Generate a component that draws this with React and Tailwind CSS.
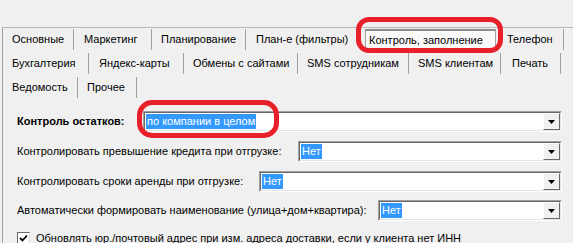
import React from "react";

const Tab = ({ w, pl, label, sep = true }) => (
	<div
		className={`h-[21px] mt-[1px] flex items-center whitespace-nowrap ${sep ? "border-r border-[#a0a0a0]" : ""}`}
		style={{ width: w, paddingLeft: pl }}
	>
		{label}
	</div>
);

const Arrow = () => (
	<div className="w-[17px] h-full flex items-center justify-center bg-[#f0f0f0] border border-t-white border-l-white border-b-[#696969] border-r-[#696969]">
		<svg width="7" height="4" viewBox="0 0 7 4">
			<polygon points="0,0 7,0 3.5,4" fill="#000" />
		</svg>
	</div>
);

const Combo = ({ value }) => (
	<div className="flex-1 h-[21px] flex border border-t-[#a0a0a0] border-l-[#a0a0a0] border-b-white border-r-white">
		<div className="flex-1 flex bg-white border border-t-[#696969] border-l-[#696969] border-b-[#e3e3e3] border-r-[#e3e3e3]">
			<div className="flex-1 flex items-center pl-[1px]">
				<span className="bg-[#3399ff] text-white h-[15px] leading-[15px] px-[1px]">{value}</span>
			</div>
			<Arrow />
		</div>
	</div>
);

export default function App() {
	return (
		<div className="w-[573px] h-[243px] bg-[#f0f0f0] relative overflow-hidden text-[11px] text-black font-['Liberation_Sans',Arial,sans-serif]">
			<div className="pt-[27px]">
				<div className="ml-[2px] border-l border-t border-l-[#a0a0a0] border-t-[#b9b9b9] h-[216px]">
					{/* row 1 */}
					<div className="flex h-[24px]">
						<Tab w={71} pl={9} label="Основные" />
						<Tab w={78} pl={10} label="Маркетинг" />
						<Tab w={94} pl={9} label="Планирование" />
						<Tab w={117} pl={10} label="План-е (фильтры)" sep={false} />
						<div className="ml-[2px] w-[131px] h-[21px] mt-[1px] flex items-center pl-[3px] whitespace-nowrap bg-[#fafafa] border border-[#a0a0a0] border-t-2 border-t-[#8c8c8c]">
							Контроль, заполнение
						</div>
						<Tab w={68} pl={11} label="Телефон" />
					</div>
					{/* row 2 */}
					<div className="flex h-[24px]">
						<Tab w={86} pl={9} label="Бухгалтерия" />
						<Tab w={95} pl={10} label="Яндекс-карты" />
						<Tab w={114} pl={9} label="Обмены с сайтами" />
						<Tab w={111} pl={9} label="SMS сотрудникам" />
						<Tab w={92} pl={9} label="SMS клиентам" />
						<Tab w={60} pl={11} label="Печать" />
					</div>
					{/* row 3 */}
					<div className="flex h-[24px]">
						<Tab w={75} pl={9} label="Ведомость" />
						<Tab w={59} pl={9} label="Прочее" />
					</div>

					<div className="pl-[14px] w-[559px] pt-[11px] flex flex-col">
						<div className="flex items-center">
							<div className="w-[126px] font-bold whitespace-nowrap">Контроль остатков:</div>
							<Combo value="по компании в целом" />
						</div>
						<div className="flex items-center mt-[9px]">
							<div className="w-[281px] whitespace-nowrap">Контролировать превышение кредита при отгрузке:</div>
							<Combo value="Нет" />
						</div>
						<div className="flex items-center mt-[9px]">
							<div className="w-[242px] whitespace-nowrap">Контролировать сроки аренды при отгрузке:</div>
							<Combo value="Нет" />
						</div>
						<div className="flex items-center mt-[8px]">
							<div className="w-[361px] whitespace-nowrap">Автоматически формировать наименование (улица+дом+квартира):</div>
							<Combo value="Нет" />
						</div>
						<div className="flex items-center mt-[9px]">
							<div className="w-[13px] h-[13px] bg-white border border-t-[#696969] border-l-[#696969] border-b-[#e3e3e3] border-r-[#e3e3e3] flex items-center justify-center">
								<svg width="9" height="9" viewBox="0 0 9 9">
									<polyline points="1,4 3.5,6.5 8,1.5" fill="none" stroke="#000" strokeWidth="1.8" />
								</svg>
							</div>
							<div className="ml-[6px] whitespace-nowrap">
								Обновлять юр./почтовый адрес при изм. адреса доставки, если у клиента нет ИНН
							</div>
						</div>
					</div>
				</div>
			</div>

			{/* red annotation marks */}
			<div className="absolute left-[356px] top-[17px] w-[147px] h-[36px] border-[5px] border-[#e8202a] rounded-[13px]" />
			<div className="absolute left-[137px] top-[100px] w-[142px] h-[38px] border-[5px] border-[#e8202a] rounded-[15px]" />
		</div>
	);
}
